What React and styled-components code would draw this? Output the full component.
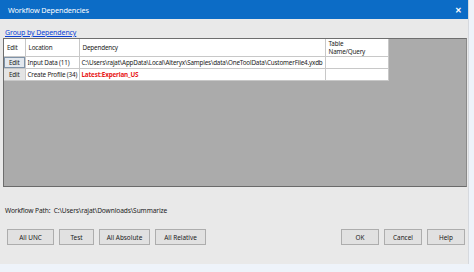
import React from 'react'
import styled, { createGlobalStyle } from 'styled-components'

const GlobalStyle = createGlobalStyle`
  html, body {
    margin: 0;
    padding: 0;
    background: #eef3fa;
  }
  body {
    font-family: 'Noto Sans', 'Open Sans', sans-serif;
    width: 474px;
    height: 272px;
    overflow: hidden;
  }
`

const rows = [
  { location: 'Input Data (11)', dependency: 'C:\\Users\\rajat\\AppData\\Local\\Alteryx\\Samples\\data\\OneToolData\\CustomerFile4.yxdb', missing: false, focused: true },
  { location: 'Create Profile (34)', dependency: 'Latest:Experian_US', missing: true, focused: false },
]

function App() {
  return (
    <>
      <GlobalStyle />
      <Window>
        <TitleBar>
          <span>Workflow Dependencies</span>
          <CloseBtn>✕</CloseBtn>
        </TitleBar>
        <Body>
          <GroupLink href='#'>Group by Dependency</GroupLink>
          <GridPanel>
            <Table>
              <colgroup>
                <col style={{ width: 21 }} />
                <col style={{ width: 54 }} />
                <col style={{ width: 246 }} />
                <col style={{ width: 63 }} />
              </colgroup>
              <thead>
                <tr>
                  <HeadCell>Edit</HeadCell>
                  <HeadCell>Location</HeadCell>
                  <HeadCell>Dependency</HeadCell>
                  <HeadCell>Table<br />Name/Query</HeadCell>
                </tr>
              </thead>
              <tbody>
                {rows.map((r) => (
                  <tr key={r.location}>
                    <EditCell>
                      <EditBtn $focused={r.focused}>Edit</EditBtn>
                    </EditCell>
                    <Cell>{r.location}</Cell>
                    <Cell $missing={r.missing}>{r.dependency}</Cell>
                    <Cell />
                  </tr>
                ))}
              </tbody>
            </Table>
          </GridPanel>
          <PathLine>Workflow Path:&nbsp; C:\Users\rajat\Downloads\Summarize</PathLine>
          <ButtonRow>
            <ButtonGroup>
              <DialogBtn $w={47}>All UNC</DialogBtn>
              <DialogBtn $w={35}>Test</DialogBtn>
              <DialogBtn $w={51}>All Absolute</DialogBtn>
              <DialogBtn $w={51}>All Relative</DialogBtn>
            </ButtonGroup>
            <ButtonGroup>
              <DialogBtn $w={38}>OK</DialogBtn>
              <DialogBtn $w={38}>Cancel</DialogBtn>
              <DialogBtn $w={38}>Help</DialogBtn>
            </ButtonGroup>
          </ButtonRow>
        </Body>
      </Window>
    </>
  )
}

export default App

const Window = styled.div`
  width: 469px;
  height: 264px;
  background: #e9e9e9;
  display: flex;
  flex-direction: column;
  box-sizing: border-box;
  border-right: 1px solid #d6d9de;
`

const TitleBar = styled.div`
  height: 19px;
  flex: none;
  background: #0c6cc6;
  color: #ffffff;
  font-size: 7.3px;
  letter-spacing: -0.1px;
  display: flex;
  align-items: center;
  justify-content: space-between;
  padding: 0 6px 0 8px;
`

const CloseBtn = styled.span`
  font-size: 8px;
  font-weight: bold;
  line-height: 1;
  margin-top: 1px;
`

const Body = styled.div`
  flex: 1;
  display: flex;
  flex-direction: column;
  padding: 8px 1px 0 3px;
`

const GroupLink = styled.a`
  color: #0a3fd6;
  font-size: 7px;
  letter-spacing: -0.1px;
  text-decoration: underline;
  margin-left: 2px;
  line-height: 11px;
  align-self: flex-start;
`

const GridPanel = styled.div`
  height: 149px;
  box-sizing: border-box;
  background: #ababab;
  border: 1px solid #6e6e6e;
  border-right-color: #8a8a8a;
  border-bottom-color: #6a6a6a;
`

const Table = styled.table`
  border-collapse: collapse;
  table-layout: fixed;
  width: 384px;
  font-size: 6.3px;
  letter-spacing: -0.16px;
  color: #1a1a1a;
  background: #ffffff;
`

const HeadCell = styled.th`
  font-weight: normal;
  text-align: left;
  vertical-align: middle;
  height: 17px;
  padding: 0 3px;
  line-height: 7.5px;
  border-right: 1px solid #c8c8c8;
  border-bottom: 1px solid #c8c8c8;
  white-space: nowrap;
  overflow: hidden;
`

const Cell = styled.td`
  height: 11px;
  padding: 0 2px;
  line-height: 11px;
  border-right: 1px solid #c8c8c8;
  border-bottom: 1px solid #c8c8c8;
  white-space: nowrap;
  overflow: hidden;
  color: ${(p) => (p.$missing ? '#e81818' : '#1a1a1a')};
  font-weight: ${(p) => (p.$missing ? 'bold' : 'normal')};
`

const EditCell = styled.td`
  height: 11px;
  padding: 0;
  background: #e4e4e4;
  border-right: 1px solid #c8c8c8;
  border-bottom: 1px solid #c8c8c8;
`

const EditBtn = styled.div`
  height: 11px;
  box-sizing: border-box;
  line-height: 9px;
  text-align: center;
  color: #1a1a1a;
  background: ${(p) => (p.$focused ? '#e3e8ee' : '#e4e4e4')};
  border: 1px solid ${(p) => (p.$focused ? '#7f93a8' : 'transparent')};
`

const PathLine = styled.div`
  font-size: 6.6px;
  letter-spacing: -0.1px;
  color: #1a1a1a;
  margin-top: 19px;
  margin-left: 2px;
  line-height: 10px;
`

const ButtonRow = styled.div`
  display: flex;
  justify-content: space-between;
  margin-top: 13px;
  padding: 0 2px 0 4px;
`

const ButtonGroup = styled.div`
  display: flex;
  gap: 5px;
`

const DialogBtn = styled.button`
  width: ${(p) => p.$w}px;
  height: 16px;
  padding: 0;
  font-family: 'Noto Sans', 'Open Sans', sans-serif;
  font-size: 6.4px;
  color: #1a1a1a;
  background: #e1e1e1;
  border: 1px solid #adadad;
  border-radius: 0;
`
